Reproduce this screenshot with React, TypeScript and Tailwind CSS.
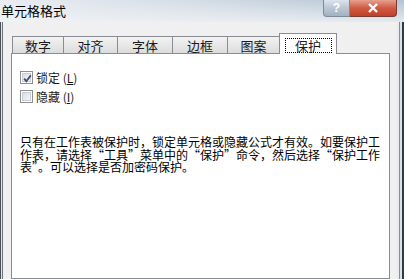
import React from "react";

const cjk = { fontFamily: '"Noto Sans CJK SC", "Noto Sans", sans-serif' };

function Box({ checked }: { checked?: boolean }) {
  return (
    <span className="relative w-[13px] h-[13px] border border-[#8e8f8f] bg-white flex items-center justify-center shrink-0">
      <span className="w-[9px] h-[9px] border border-[#c9cdd3] bg-gradient-to-br from-[#d9dde3] to-[#f6f7f9]" />
      {checked && (
        <svg viewBox="0 0 11 11" className="absolute left-[1px] top-[1px] w-[11px] h-[11px]">
          <path d="M2.2 5.6 L4.3 8.2 L8.8 2.4" fill="none" stroke="#3a4f7a" strokeWidth="1.8" />
        </svg>
      )}
    </span>
  );
}

export default function App() {
  const tabs = [
    { label: "数字", w: "w-[52px]" },
    { label: "对齐", w: "w-[55px]" },
    { label: "字体", w: "w-[56px]" },
    { label: "边框", w: "w-[56px]" },
    { label: "图案", w: "w-[53px]" },
  ];

  return (
    <div lang="zh-CN" className="w-[404px] h-[279px] overflow-hidden flex flex-col bg-[#cfd9e4] text-[#1a1a1a]" style={cjk}>
      {/* title bar */}
      <div className="h-[22px] flex items-start bg-gradient-to-r from-[#e9edf2] via-[#d3dbe4] to-[#b3c3d4] relative">
        <div className="absolute inset-0 bg-gradient-to-b from-transparent to-[#f0f3f6]/80" />
        <span className="relative pl-[1px] pt-[3px] text-[13px] leading-[15px] text-black">单元格格式</span>
        <div className="relative ml-auto mr-[7px] flex">
          <div className="w-[27px] h-[17px] border border-[#7d8a98] border-t-0 rounded-bl-[4px] bg-gradient-to-b from-[#dce4ed] via-[#b9c6d4] to-[#a2b2c3] flex items-center justify-center text-white text-[12px] font-bold leading-none" style={{ fontFamily: '"Liberation Sans", sans-serif' }}>
            ?
          </div>
          <div className="w-[47px] h-[17px] border border-[#7a3b30] border-t-0 border-l-0 rounded-br-[4px] bg-gradient-to-b from-[#e5a08f] via-[#cf5a42] to-[#c0402a] flex items-center justify-center">
            <svg viewBox="0 0 12 10" className="w-[12px] h-[10px]">
              <path d="M2 1 L10 9 M10 1 L2 9" stroke="#fff" strokeWidth="2.4" />
            </svg>
          </div>
        </div>
      </div>

      {/* body */}
      <div className="flex-1 flex min-h-0">
        <div className="w-[3px] border-l border-r border-l-[#4a4f55] border-r-[#6d747c] bg-[#dfe6ee]" />
        <div className="flex-1 bg-[#f0f0f0] pt-[11px] pl-[8px] pr-[7px] flex flex-col min-h-0">
          <div className="relative z-10 flex items-end h-[21px] -mb-px pl-[1px]">
            {tabs.map((t, i) => (
              <div
                key={t.label}
                className={`${t.w} h-[17px] mb-px ${i > 0 ? "-ml-px" : ""} border border-b-0 border-[#898c95] bg-gradient-to-b from-[#f3f3f3] to-[#dcdcdc] flex items-center justify-center text-[13px] leading-none pt-[1px]`}
              >
                {t.label}
              </div>
            ))}
            <div className="w-[58px] h-[21px] -ml-px border border-b-0 border-[#898c95] bg-white flex items-start justify-center pt-[4px]">
              <span className="w-[47px] h-[15px] border border-dotted border-black flex items-center justify-center text-[13px] leading-none">
                保护
              </span>
            </div>
          </div>
          <div className="flex-1 w-[379px] border border-[#898c95] bg-white pt-[17px] pl-[8px]">
            <label className="flex items-center gap-[3px] h-[13px] text-[12px] leading-none">
              <Box checked />
              <span>
                锁定 (<span className="underline">L</span>)
              </span>
            </label>
            <label className="flex items-center gap-[3px] h-[13px] mt-[6px] text-[12px] leading-none">
              <Box />
              <span>
                隐藏 (<span className="underline">I</span>)
              </span>
            </label>
            <p className="mt-[33px] w-[362px] text-[12px] leading-[12.5px] text-black">
              只有在工作表被保护时，锁定单元格或隐藏公式才有效。如要保护工作表，请选择“工具”菜单中的“保护”命令，然后选择“保护工作表”。可以选择是否加密码保护。
            </p>
          </div>
        </div>
        <div className="w-[7px] flex">
          <div className="w-[2px] bg-[#e8ecf0]" />
          <div className="w-px bg-[#8a8e93]" />
          <div className="w-[2px] bg-[#d8e0e8]" />
          <div className="w-[2px] bg-[#2f3a45]" />
        </div>
      </div>
    </div>
  );
}
